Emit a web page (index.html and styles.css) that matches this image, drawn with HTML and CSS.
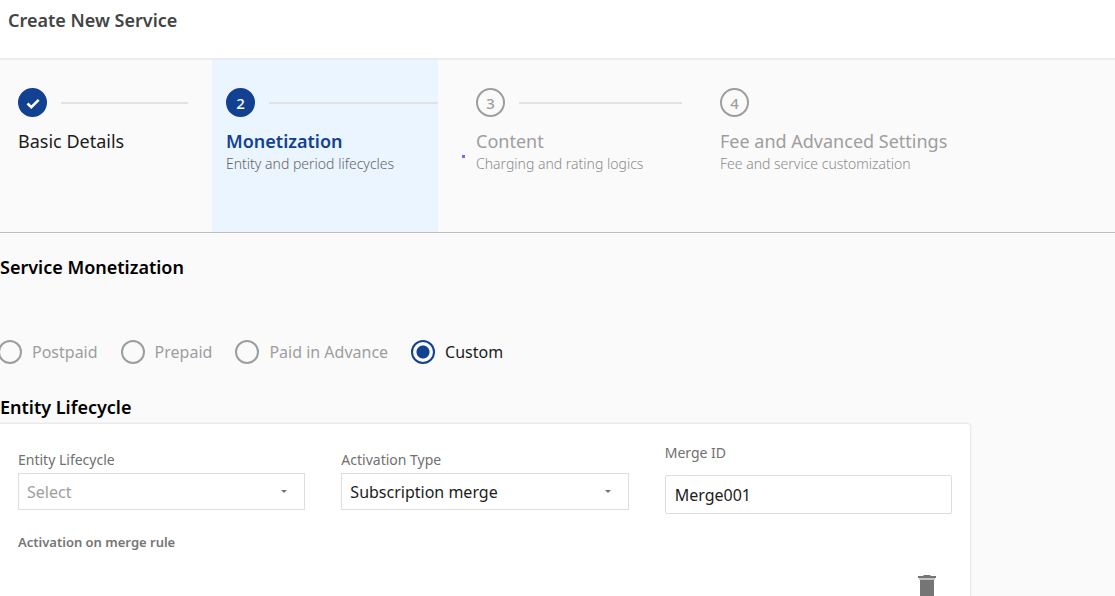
FILE: index.html
```html
<!DOCTYPE html>
<html lang="en">
<head>
<meta charset="utf-8">
<meta name="viewport" content="width=device-width, initial-scale=1">
<title>Create New Service</title>
<link rel="stylesheet" href="styles.css">
</head>
<body>
<div class="app">
  <header class="topbar"><h1 class="topbar-title">Create New Service</h1></header>
  <ol class="stepper">
    <li class="step step-done">
      <div class="step-track">
        <span class="step-badge">
          <svg class="step-check" viewBox="0 0 24 24" aria-label="Completed"><path d="M6.5 12.5l3.8 3.7 7.4-7.4" fill="none" stroke="currentColor" stroke-width="2.6"/></svg>
        </span>
        <span class="step-line"></span>
      </div>
      <div class="step-title">Basic Details</div>
    </li>
    <li class="step step-active" aria-current="step">
      <div class="step-track"><span class="step-badge">2</span><span class="step-line"></span></div>
      <div class="step-title">Monetization</div>
      <div class="step-note">Entity and period lifecycles</div>
    </li>
    <li class="step step-pending">
      <div class="step-track"><span class="step-badge">3</span><span class="step-line"></span></div>
      <div class="step-title">Content</div>
      <div class="step-note">Charging and rating logics</div>
      <span class="step-dot"></span>
    </li>
    <li class="step step-pending">
      <div class="step-track"><span class="step-badge">4</span></div>
      <div class="step-title">Fee and Advanced Settings</div>
      <div class="step-note">Fee and service customization</div>
    </li>
  </ol>
  <main class="content">
    <h2 class="section-title">Service Monetization</h2>
    <div class="radio-group" role="radiogroup" aria-label="Service Monetization">
      <label class="radio"><input class="radio-input" type="radio" name="mode" disabled><span>Postpaid</span></label>
      <label class="radio"><input class="radio-input" type="radio" name="mode" disabled><span>Prepaid</span></label>
      <label class="radio"><input class="radio-input" type="radio" name="mode" disabled><span>Paid in Advance</span></label>
      <label class="radio radio-on"><input class="radio-input" type="radio" name="mode" checked><span>Custom</span></label>
    </div>
    <h2 class="section-title">Entity Lifecycle</h2>
    <section class="card">
      <div class="fields">
        <div class="field">
          <label class="field-label" for="lifecycle">Entity Lifecycle</label>
          <div class="select-wrap">
            <select class="control control-select control-empty" id="lifecycle"><option>Select</option></select>
            <svg class="caret" viewBox="0 0 6 4"><path d="M0 0h6L3 3z" fill="currentColor"/></svg>
          </div>
        </div>
        <div class="field">
          <label class="field-label" for="activation">Activation Type</label>
          <div class="select-wrap">
            <select class="control control-select" id="activation"><option>Subscription merge</option></select>
            <svg class="caret" viewBox="0 0 6 4"><path d="M0 0h6L3 3z" fill="currentColor"/></svg>
          </div>
        </div>
        <div class="field field-text">
          <label class="field-label" for="merge">Merge ID</label>
          <input class="control control-text" id="merge" type="text" value="Merge001">
        </div>
      </div>
      <h3 class="rule-title">Activation on merge rule</h3>
      <div class="card-actions">
        <button class="icon-button" type="button" aria-label="Delete">
          <svg class="trash" viewBox="0 0 18 24"><path d="M0 2h5l1-1h6l1 1h5v2H0z" fill="#757575"/><path d="M1 4h16v2H1z" fill="#c4c4c4"/><path d="M2 6h14v16a2 2 0 0 1-2 2H4a2 2 0 0 1-2-2z" fill="#757575"/></svg>
        </button>
      </div>
    </section>
  </main>
</div>
</body>
</html>
```

FILE: styles.css
```css
* { box-sizing: border-box; }

body {
  margin: 0;
  background: #fafafa;
  color: #1c1c1c;
  font-family: "Noto Sans", "Open Sans", sans-serif;
  font-size: 16px;
}

h1, h2, h3 { margin: 0; }

.app { height: 100vh; overflow: hidden; }

.topbar {
  padding: 8px 8px 26px;
  background: #fff;
  border-bottom: 2px solid #ebebeb;
}

.topbar-title {
  color: #444;
  font-size: 18px;
  font-weight: 600;
  line-height: 24px;
}

.stepper {
  display: grid;
  grid-template-columns: 212fr 226fr 244fr 433fr;
  min-height: 173px;
  margin: 0;
  padding: 0;
  list-style: none;
  border-bottom: 1px solid #bdbdbd;
}

.step { position: relative; padding: 28px 0 0 38px; white-space: nowrap; }
.step-done { padding-left: 18px; padding-right: 24px; color: #1c1c1c; }
.step-active { padding-left: 14px; background: #eaf5ff; color: #124191; }
.step-pending { color: #9e9e9e; }

.step-track { display: flex; align-items: center; gap: 14px; }

.step-badge {
  display: grid;
  flex: none;
  place-items: center;
  width: 29px;
  height: 29px;
  border: 2px solid #9e9e9e;
  border-radius: 50%;
  font-size: 15px;
  font-weight: 500;
  line-height: 20px;
}

.step-done .step-badge,
.step-active .step-badge { border-color: #124191; background: #124191; color: #fff; }

.step-check { width: 24px; height: 24px; }
.step-line { flex: 1; height: 2px; background: #e2e2e2; }
.step-title { margin-top: 12px; font-size: 18px; line-height: 24px; }
.step-active .step-title { font-weight: 600; }
.step-note { font-size: 14px; font-weight: 300; line-height: 22px; }
.step-active .step-note { color: #666; }
.step-pending .step-note { color: #8c8c8c; }

.step-dot {
  position: absolute;
  top: 95px;
  left: 24px;
  width: 3px;
  height: 3px;
  background: #7070f4;
}

.section-title {
  color: #000;
  font-size: 18px;
  font-weight: 600;
  line-height: 24px;
}

.content { padding-top: 22px; }

.radio-group { display: flex; gap: 23px; margin: 61px 0 31px -2px; }
.radio { display: flex; align-items: center; gap: 10px; color: #9e9e9e; line-height: 24px; }
.radio-on { color: #1c1c1c; }

.radio-input {
  appearance: none;
  width: 24px;
  height: 24px;
  margin: 0;
  border: 2px solid #9e9e9e;
  border-radius: 50%;
}

.radio-input:checked {
  border-color: #124191;
  background: radial-gradient(circle, #124191 6px, transparent 7px);
}

.card {
  width: 87%;
  min-height: 240px;
  margin-top: 5px;
  padding: 19px 18px;
  background: #fff;
  border-radius: 0 3px 3px 0;
  box-shadow: 0 0 2px 1px #e4e4e4;
}

.fields { display: grid; grid-template-columns: repeat(3, 1fr); gap: 36px; }
.field { padding-top: 7px; }
.field-text { padding-top: 0; }
.field-label { display: block; color: #707070; font-size: 14px; line-height: 20px; }
.select-wrap { display: grid; align-items: center; margin-top: 3px; }

.control {
  width: 100%;
  height: 37px;
  padding: 0 9px;
  border: 1px solid #dedede;
  background: #fff;
  color: #1c1c1c;
  font: inherit;
}

.control-select { grid-area: 1 / 1; appearance: none; padding: 0 32px 0 8px; }
.control-empty { color: #9e9e9e; }
.control-text { height: 39px; margin-top: 12px; border-radius: 2px; }

.caret {
  grid-area: 1 / 1;
  justify-self: end;
  width: 6px;
  height: 4px;
  margin-right: 18px;
  color: #757575;
  pointer-events: none;
}

.rule-title { margin-top: 18px; color: #757575; font-size: 13px; font-weight: 600; line-height: 20px; }
.card-actions { display: flex; justify-content: flex-end; margin-top: 22px; padding-right: 16px; }
.icon-button { padding: 0; border: 0; background: none; }
.trash { display: block; width: 18px; height: 24px; }
```
